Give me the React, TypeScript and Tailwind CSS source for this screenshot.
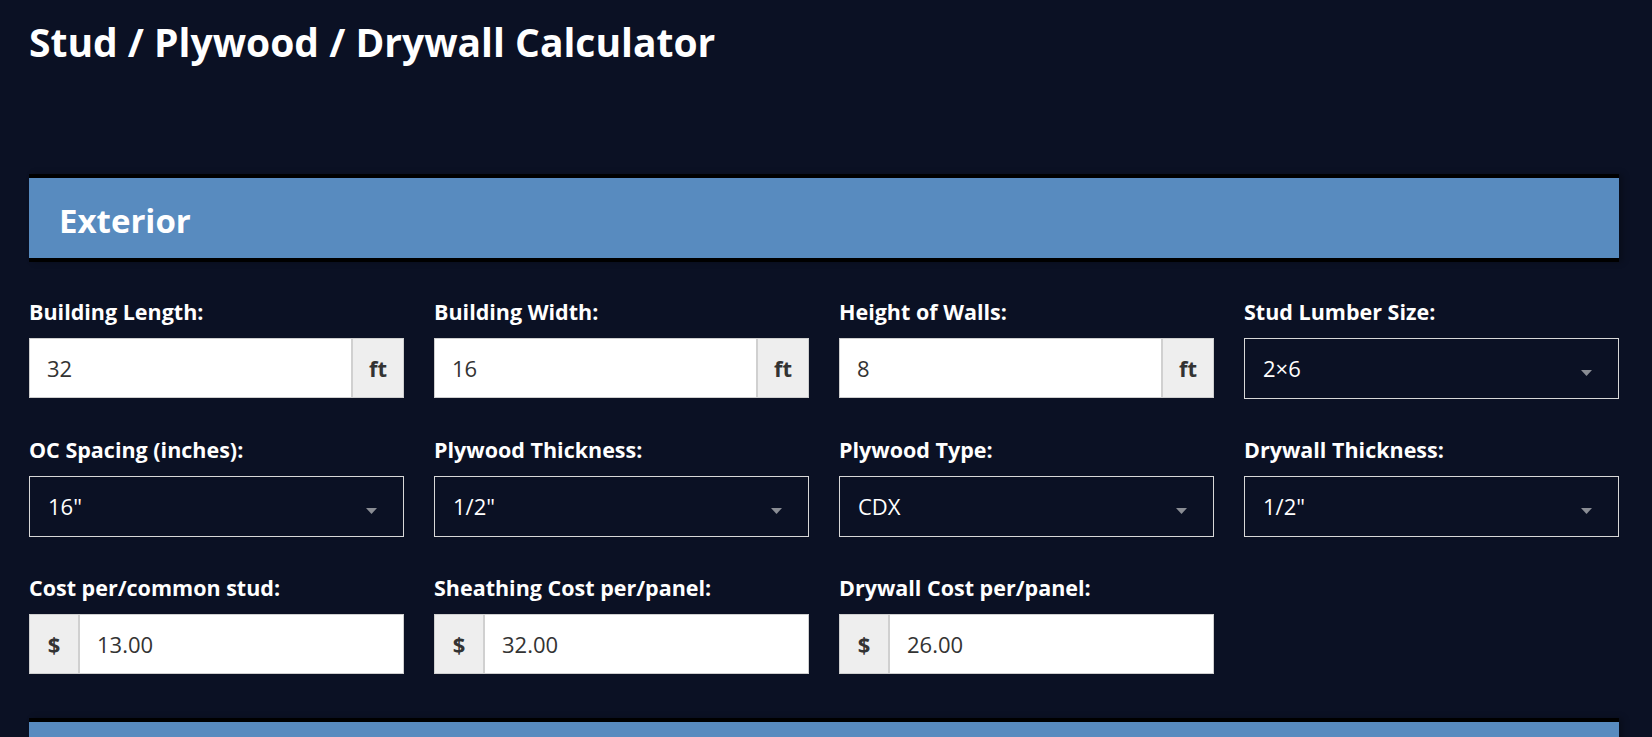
import React from "react";

const font = { fontFamily: '"Open Sans", "Noto Sans", sans-serif' };

function Caret() {
  return (
    <svg width="11" height="6" viewBox="0 0 11 6" className="absolute right-[26px] top-[31px]">
      <path d="M0 0 H11 L5.5 6 Z" fill="#8a8d94" />
    </svg>
  );
}

function Label({ children }: { children: React.ReactNode }) {
  return <div className="mb-[10px] text-[21.5px] font-bold leading-[33px] text-white">{children}</div>;
}

function SuffixInput({ label, value, suffix }: { label: string; value: string; suffix: string }) {
  return (
    <div>
      <Label>{label}</Label>
      <div className="flex h-[60px] border border-[#cfcfcf] bg-white">
        <div className="flex flex-1 items-center pl-[17px] text-[22px] text-[#333]">{value}</div>
        <div className="flex w-[52px] items-center justify-center border-l-2 border-[#d0d0d0] bg-[#eeeeee] text-[22px] font-bold text-[#333]">
          {suffix}
        </div>
      </div>
    </div>
  );
}

function PrefixInput({ label, value }: { label: string; value: string }) {
  return (
    <div>
      <Label>{label}</Label>
      <div className="flex h-[60px] border border-[#cfcfcf] bg-white">
        <div className="flex w-[50px] items-center justify-center border-r-2 border-[#d0d0d0] bg-[#eeeeee] text-[22px] font-bold text-[#333]">
          $
        </div>
        <div className="flex flex-1 items-center pl-[17px] text-[22px] text-[#333]">{value}</div>
      </div>
    </div>
  );
}

function SelectBox({ label, value }: { label: string; value: string }) {
  return (
    <div>
      <Label>{label}</Label>
      <div className="relative flex h-[61px] items-center border border-[#d8d8d8] pl-[18px] text-[22px] text-white">
        {value}
        <Caret />
      </div>
    </div>
  );
}

function SectionHeader({ title }: { title?: string }) {
  return (
    <div className="border-y-4 border-black bg-[#588bbf] shadow-[4px_0_6px_rgba(0,0,0,0.25)]">
      <h2 className="flex h-[80px] items-center pl-[30px] pt-[5px] text-[33px] font-bold text-white">{title}</h2>
    </div>
  );
}

export default function App() {
  return (
    <div className="min-h-screen bg-[#0b1124] pl-[29px] pr-[33px]" style={font}>
      <h1 className="pt-[14px] text-[39px] font-bold leading-[56px] text-white">Stud / Plywood / Drywall Calculator</h1>
      <div className="mt-[104px]">
        <SectionHeader title="Exterior" />
        <div className="mt-[33px] grid grid-cols-4 gap-x-[30px] gap-y-[34px]">
          <SuffixInput label="Building Length:" value="32" suffix="ft" />
          <SuffixInput label="Building Width:" value="16" suffix="ft" />
          <SuffixInput label="Height of Walls:" value="8" suffix="ft" />
          <SelectBox label="Stud Lumber Size:" value="2×6" />
          <SelectBox label="OC Spacing (inches):" value={'16"'} />
          <SelectBox label="Plywood Thickness:" value={'1/2"'} />
          <SelectBox label="Plywood Type:" value="CDX" />
          <SelectBox label="Drywall Thickness:" value={'1/2"'} />
          <PrefixInput label="Cost per/common stud:" value="13.00" />
          <PrefixInput label="Sheathing Cost per/panel:" value="32.00" />
          <PrefixInput label="Drywall Cost per/panel:" value="26.00" />
        </div>
        <div className="mt-[44px]">
          <SectionHeader />
        </div>
      </div>
    </div>
  );
}
